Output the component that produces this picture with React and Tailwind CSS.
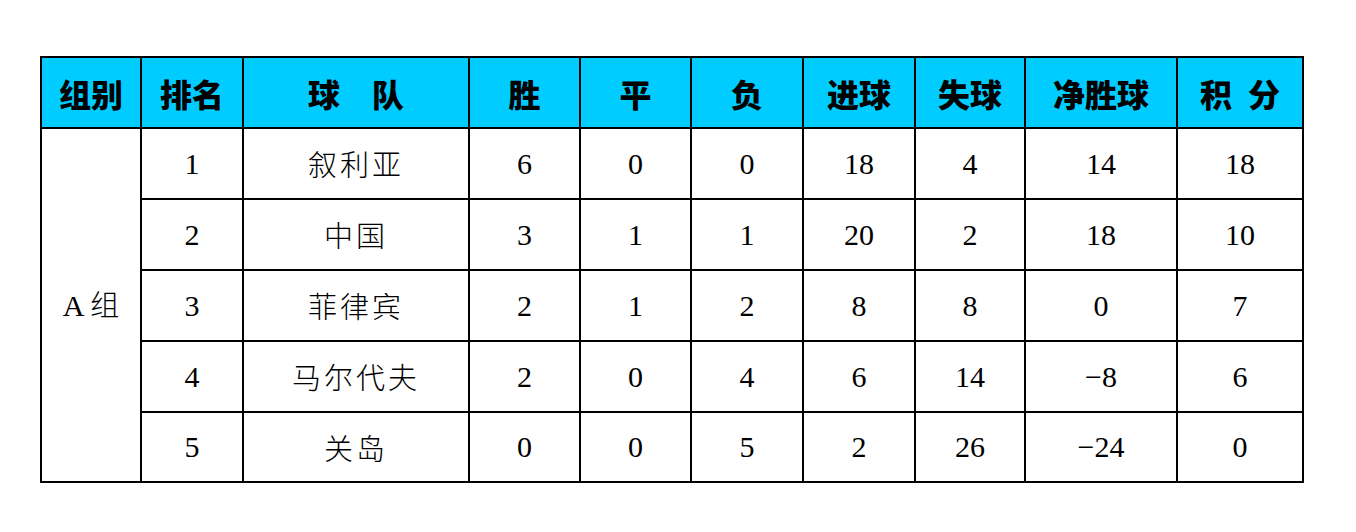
const headers = ["组别", "排名", "球\u3000队", "胜", "平", "负", "进球", "失球", "净胜球", "积\u2002分"];
const widths = ["w-[100px]", "w-[102px]", "w-[226px]", "w-[111px]", "w-[111px]", "w-[112px]", "w-[112px]", "w-[110px]", "w-[152px]", "w-[126px]"];

const rows = [
  ["1", "叙利亚", "6", "0", "0", "18", "4", "14", "18"],
  ["2", "中国", "3", "1", "1", "20", "2", "18", "10"],
  ["3", "菲律宾", "2", "1", "2", "8", "8", "0", "7"],
  ["4", "马尔代夫", "2", "0", "4", "6", "14", "\u22128", "6"],
  ["5", "关岛", "0", "0", "5", "2", "26", "\u221224", "0"],
];

export default function App() {
  return (
    <div className="w-[1356px] h-[532px] bg-white pt-[56px] pl-[40px]">
      <table className="table-fixed border-collapse w-[1263px]">
        <colgroup>
          {widths.map((w, i) => (
            <col key={i} className={w} />
          ))}
        </colgroup>
        <thead>
          <tr className="h-[71px] bg-[#00ccff]">
            {headers.map((h) => (
              <th
                key={h}
                className="border-2 border-black text-center text-[32px] font-black text-black font-['Noto_Sans_CJK_SC',sans-serif] leading-none"
              >
                {h}
              </th>
            ))}
          </tr>
        </thead>
        <tbody className="font-['Liberation_Serif','Noto_Sans_CJK_SC',serif] text-[30px] text-black">
          {rows.map((r, i) => (
            <tr key={i} className={i === 4 ? "h-[70px]" : "h-[71px]"}>
              {i === 0 && (
                <td rowSpan={5} className="border-2 border-black text-center">
                  A <span className="font-['Noto_Sans_CJK_SC',sans-serif] font-light text-[29px]">组</span>
                </td>
              )}
              {r.map((c, j) => (
                <td
                  key={j}
                  className={`border-2 border-black text-center leading-none ${
                    j === 1 ? "font-['Noto_Sans_CJK_SC',sans-serif] font-light tracking-[3px] text-[29px]" : ""
                  }`}
                >
                  {c}
                </td>
              ))}
            </tr>
          ))}
        </tbody>
      </table>
    </div>
  );
}
